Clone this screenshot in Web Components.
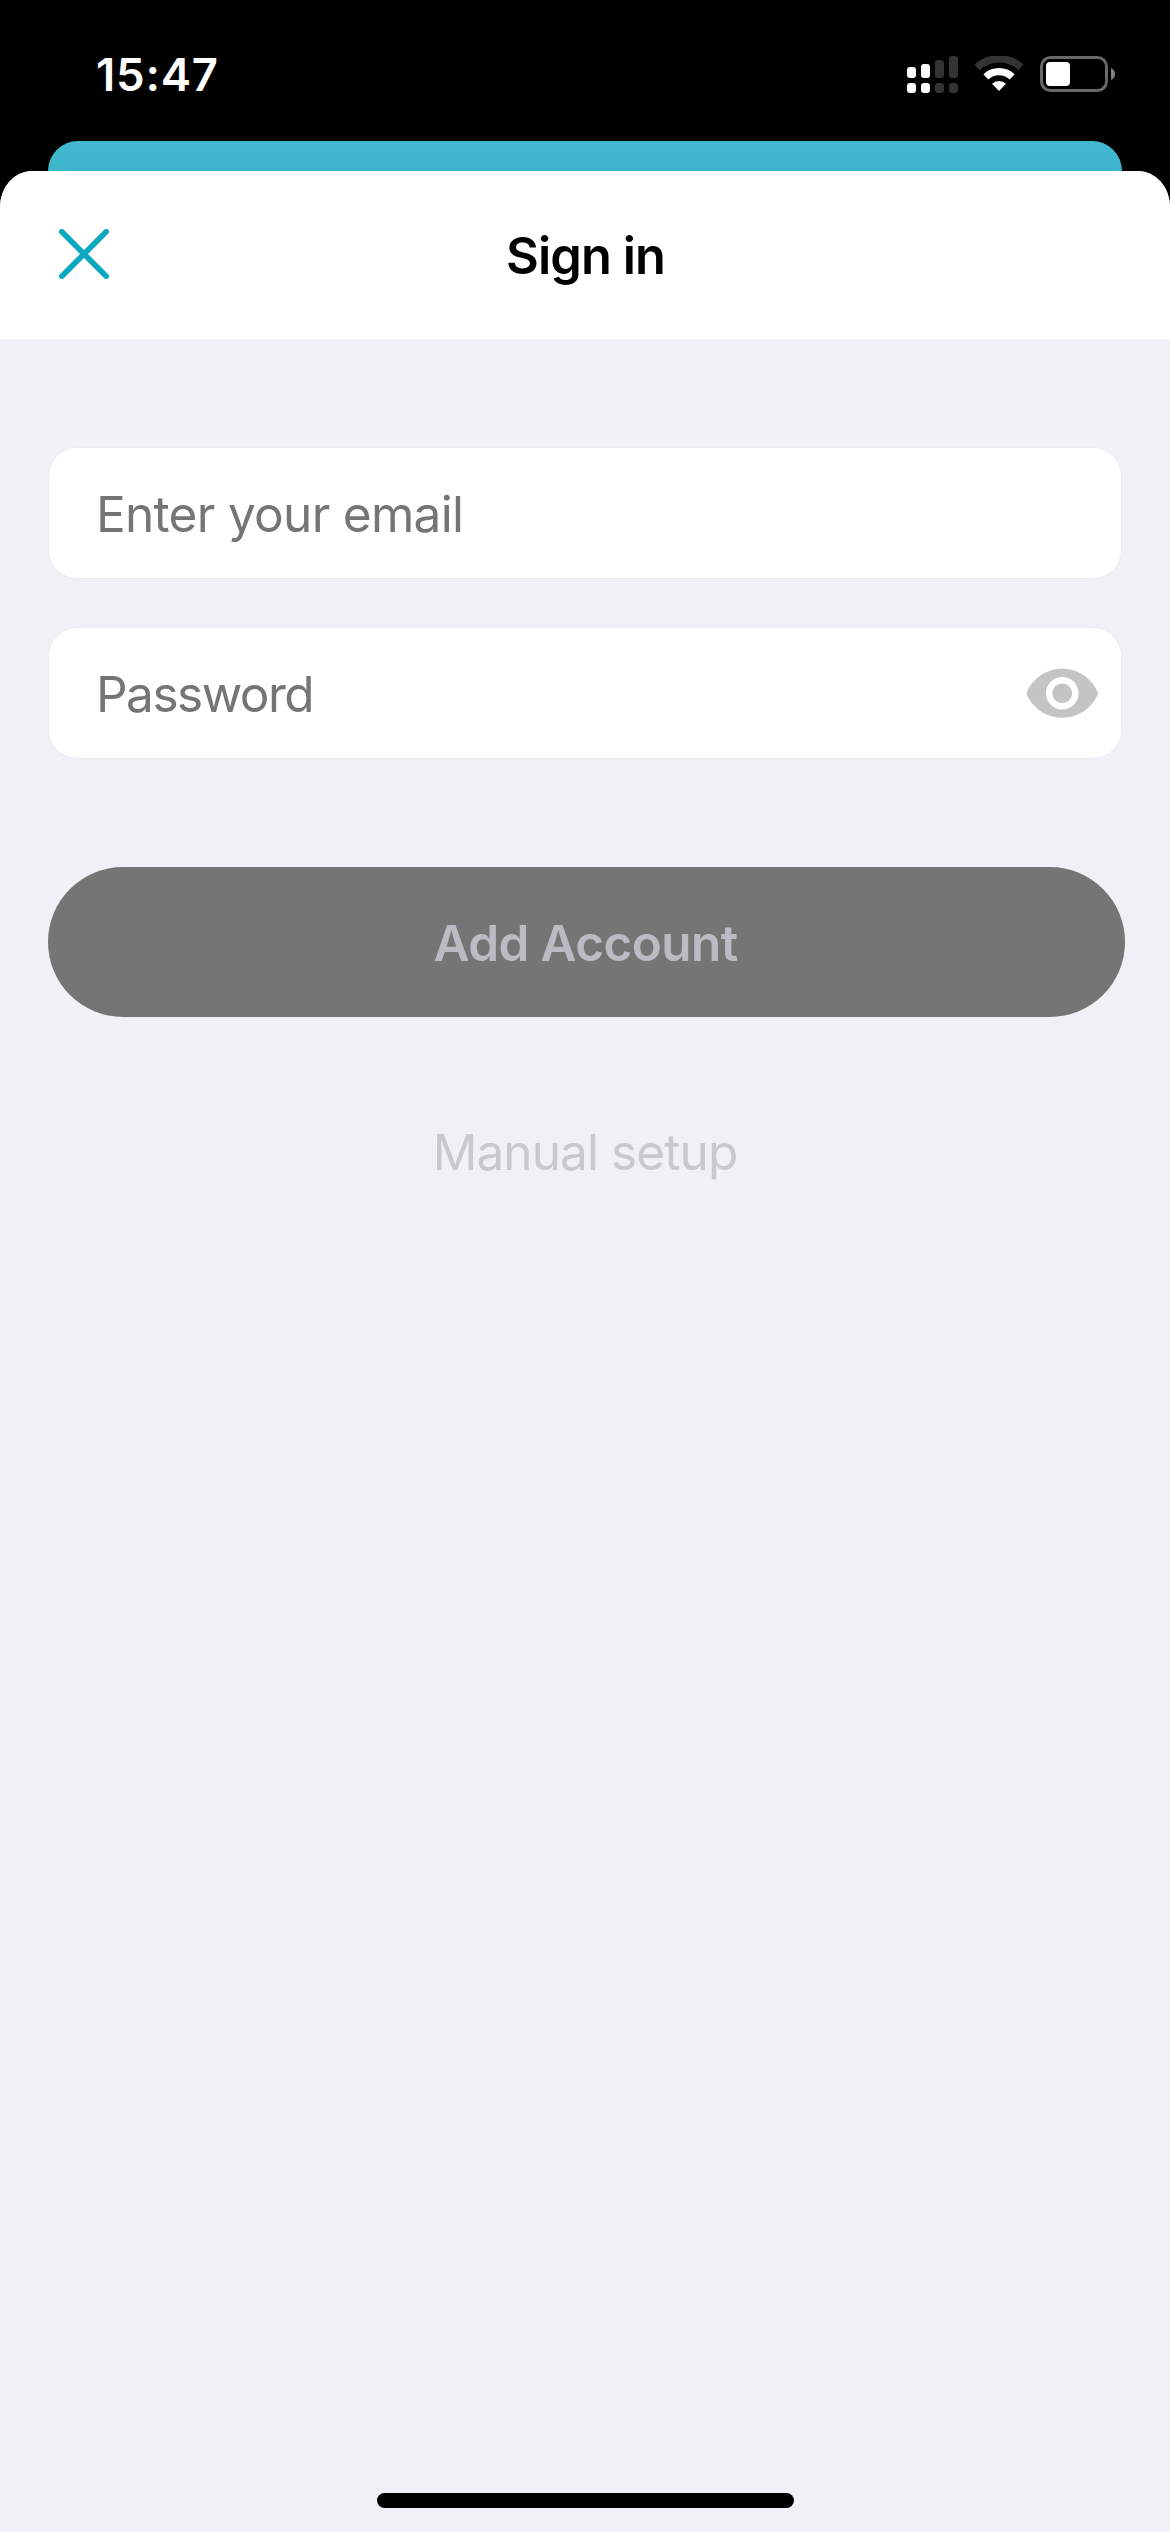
<!DOCTYPE html>
<html lang="en">
<head>
<meta charset="utf-8">
<meta name="viewport" content="width=1170">
<title>Sign in</title>
<style>
    html, body {
        margin: 0;
        height: 2532px;
        background: #000;
        overflow: hidden;
        font-family: Inter, "Liberation Sans", sans-serif;
    }
</style>
</head>
<body>
<sign-in-app>
    <status-bar slot="status">15:47</status-bar>
    <sheet-header slot="header">Sign in</sheet-header>
    <form-field style="--spacing: -0.7px">Enter your email</form-field>
    <form-field reveal style="--spacing: -1.5px">Password</form-field>
    <pill-button>Add Account</pill-button>
    <text-link>Manual setup</text-link>
</sign-in-app>

<script>
class SignInApp extends HTMLElement {
    constructor() {
        super();
        this.shadowDOM = this.attachShadow({mode: 'open'});
    }

    connectedCallback() {
        this.shadowDOM.innerHTML = `
        <style>
            :host {
                display: flex;
                flex-direction: column;
                width: 1170px;
                height: 2532px;
                background: #000;
            }
            .behind {
                height: 30px;
                margin: 0 48px;
                flex: none;
                border-radius: 30px 30px 0 0;
                background: linear-gradient(#41bad1, #3db6cc);
            }
            .sheet {
                flex: 1;
                display: flex;
                flex-direction: column;
                border-radius: 32px 32px 0 0 / 36px 36px 0 0;
                background: #f1f0f6;
                overflow: hidden;
            }
            .form {
                flex: 1;
                display: flex;
                flex-direction: column;
                padding: 109px 49px 0;
            }
            .home {
                width: 417px;
                height: 15px;
                margin: 0 0 24px 377px;
                border-radius: 8px;
                background: #000;
            }
        </style>
        <slot name="status"></slot>
        <div class="behind"></div>
        <div class="sheet">
            <slot name="header"></slot>
            <div class="form"><slot></slot></div>
            <div class="home"></div>
        </div>
        `;
    }
}

class StatusBar extends HTMLElement {
    constructor() {
        super();
        this.shadowDOM = this.attachShadow({mode: 'open'});
    }

    connectedCallback() {
        this.shadowDOM.innerHTML = `
        <style>
            :host {
                display: flex;
                justify-content: space-between;
                align-items: center;
                box-sizing: border-box;
                flex: none;
                height: 141px;
                padding: 8px 55px 0 96px;
                color: #fff;
            }
            .time {
                font-size: 45.5px;
                font-weight: 570;
                line-height: 56px;
                letter-spacing: 0.8px;
            }
            svg { display: block; }
        </style>
        <span class="time"><slot></slot></span>
        <!-- signal, wifi, battery -->
        <svg width="208" height="37" viewBox="907 56 208 37" fill="#fff">
            <rect x="907" y="67" width="9" height="11" rx="3"/>
            <rect x="921" y="64" width="9" height="14" rx="3"/>
            <rect x="907" y="83" width="9" height="10" rx="3"/>
            <rect x="921" y="83" width="9" height="10" rx="3"/>
            <g fill="#333">
                <rect x="935" y="60" width="9" height="18" rx="3"/>
                <rect x="949" y="56" width="9" height="22" rx="3"/>
                <rect x="935" y="83" width="9" height="10" rx="3"/>
                <rect x="949" y="83" width="9" height="10" rx="3"/>
            </g>
            <path d="M977 67.4a32.3 32.3 0 0 1 44 0" fill="none" stroke="#333" stroke-width="7.5"/>
            <path d="M985.8 76.9a19.3 19.3 0 0 1 26.4 0" fill="none" stroke="#fff" stroke-width="7.2"/>
            <path d="M999 91l-7-7.2a10.3 10.3 0 0 1 14 0z"/>
            <rect x="1041.5" y="57.5" width="65" height="33" rx="9" fill="none" stroke="#686868" stroke-width="3"/>
            <rect x="1046" y="62" width="24" height="24" rx="4"/>
            <path d="M1111 68q4 2 4 6t-4 6z" fill="#808080"/>
        </svg>
        `;
    }
}

class SheetHeader extends HTMLElement {
    constructor() {
        super();
        this.shadowDOM = this.attachShadow({mode: 'open'});
    }

    connectedCallback() {
        this.shadowDOM.innerHTML = `
        <style>
            :host {
                display: grid;
                grid-template-columns: 50px 1fr 50px;
                align-items: center;
                box-sizing: border-box;
                height: 168px;
                padding: 0 59px 2px;
                background: #fff;
            }
            svg { display: block; }
            h1 {
                margin: 0;
                padding: 3px 0 0 1px;
                font-size: 50.5px;
                font-weight: 580;
                line-height: 60px;
                letter-spacing: -0.9px;
                text-align: center;
                color: #000;
            }
        </style>
        <svg width="50" height="50" viewBox="0 0 50 50" fill="none" stroke="#0ba8c0" stroke-width="5.6" stroke-linecap="round">
            <path d="M2.8 2.8l44.4 44.4M47.2 2.8l-44.4 44.4"/>
        </svg>
        <h1><slot></slot></h1>
        `;
    }
}

class FormField extends HTMLElement {
    constructor() {
        super();
        this.shadowDOM = this.attachShadow({mode: 'open'});
    }

    connectedCallback() {
        // Material "visibility" eye, only on fields that can be revealed
        const eye = this.hasAttribute('reveal') ? `
        <svg width="78.5" height="78.5" viewBox="0 0 24 24" fill="#c4c4c4">
            <path d="M12 4.5C7 4.5 2.73 7.61 1 12c1.73 4.39 6 7.5 11 7.5s9.27-3.11 11-7.5c-1.73-4.39-6-7.5-11-7.5zM12 17c-2.76 0-5-2.24-5-5s2.24-5 5-5 5 2.24 5 5-2.24 5-5 5zm0-8c-1.66 0-3 1.34-3 3s1.34 3 3 3 3-1.34 3-3-1.34-3-3-3z"/>
        </svg>` : '';

        this.shadowDOM.innerHTML = `
        <style>
            :host {
                display: flex;
                align-items: center;
                justify-content: space-between;
                box-sizing: border-box;
                height: 130px;
                margin-bottom: 50px;
                padding: 1px 20px 0 47px;
                border-radius: 28px;
                background: #fff;
                box-shadow: 0 0 0 1px rgba(0, 0, 0, 0.02);
            }
            span {
                font-size: 49.5px;
                line-height: 60px;
                letter-spacing: var(--spacing, 0);
                color: #757575;
            }
            svg { display: block; }
        </style>
        <span><slot></slot></span>
        ${eye}
        `;
    }
}

class PillButton extends HTMLElement {
    constructor() {
        super();
        this.shadowDOM = this.attachShadow({mode: 'open'});
    }

    connectedCallback() {
        this.shadowDOM.innerHTML = `
        <style>
            :host {
                display: flex;
                align-items: center;
                justify-content: center;
                box-sizing: border-box;
                height: 150px;
                margin: 59px -4px 0 -1px;
                padding: 2px 2px 0 0;
                border-radius: 75px;
                background: #757575;
                color: #bcbbc4;
                font-size: 49.5px;
                font-weight: 580;
                letter-spacing: -0.6px;
            }
        </style>
        <slot></slot>
        `;
    }
}

class TextLink extends HTMLElement {
    constructor() {
        super();
        this.shadowDOM = this.attachShadow({mode: 'open'});
    }

    connectedCallback() {
        this.shadowDOM.innerHTML = `
        <style>
            :host {
                display: block;
                margin-top: 105px;
                font-size: 49.5px;
                line-height: 60px;
                letter-spacing: -0.9px;
                text-align: center;
                color: #c9c9cd;
            }
        </style>
        <slot></slot>
        `;
    }
}

customElements.define('sign-in-app', SignInApp);
customElements.define('status-bar', StatusBar);
customElements.define('sheet-header', SheetHeader);
customElements.define('form-field', FormField);
customElements.define('pill-button', PillButton);
customElements.define('text-link', TextLink);
</script>
</body>
</html>
